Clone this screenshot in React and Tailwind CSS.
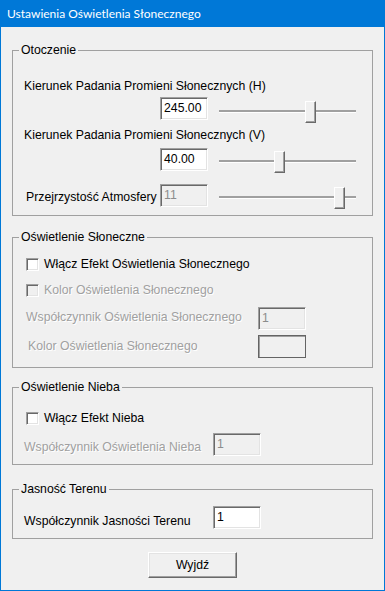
import React from 'react';

// classic sunken edit box
const TextBox = ({ value, disabled }) => (
  <div
    className={`w-[48px] h-[23px] shrink-0 flex items-center pl-[3px] border border-t-[#a0a0a0] border-l-[#a0a0a0] border-r-white border-b-white shadow-[inset_1px_1px_0_#696969,inset_-1px_-1px_0_#e3e3e3] ${
      disabled ? 'bg-[#f0f0f0] text-[#8c8c8c]' : 'bg-white text-black'
    }`}
  >
    {value}
  </div>
);

const CheckBox = ({ disabled }) => (
  <div
    className={`w-[13px] h-[13px] shrink-0 border border-t-[#a0a0a0] border-l-[#a0a0a0] border-r-white border-b-white shadow-[inset_1px_1px_0_#696969,inset_-1px_-1px_0_#e3e3e3] ${
      disabled ? 'bg-[#f0f0f0]' : 'bg-white'
    }`}
  />
);

const Slider = ({ thumb, top }) => (
  <div className={`relative w-[137px] h-[22px] ml-[11px] shrink-0 ${top}`}>
    <div className="mt-[9px] h-[3px] bg-[#a0a0a0] border-b border-white" />
    <div
      className={`absolute top-0 ${thumb} w-[11px] h-[22px] bg-[#f0f0f0] border border-t-white border-l-white border-r-[#696969] border-b-[#696969] shadow-[inset_-1px_-1px_0_#a0a0a0]`}
    />
  </div>
);

const Group = ({ title, className, children }) => (
  <fieldset
    className={`mx-[11px] px-[6px] border border-[#a0a0a0] ${className}`}
  >
    <legend className="px-[2px] leading-[15px] bg-[#f0f0f0]">{title}</legend>
    <div className="pl-[5px]">{children}</div>
  </fieldset>
);

const Disabled = ({ children, className = '' }) => (
  <div className={`text-[#a0a0a0] [text-shadow:1px_1px_0_#fff] leading-[15px] ${className}`}>
    {children}
  </div>
);

export default function App() {
  return (
    <div className="w-[385px] h-[591px] bg-[#0078d7] flex flex-col font-['Liberation_Sans',Arial,sans-serif] text-[12.25px] text-black select-none">
      {/* title bar */}
      <div className="h-[27px] flex items-center pl-[7px] text-white text-[12px] font-['Lato','Liberation_Sans',sans-serif] shrink-0">
        Ustawienia Oświetlenia Słonecznego
      </div>

      {/* client area */}
      <div className="flex-1 mx-px mb-px bg-[#f0f0f0] flex flex-col">
        <Group title="Otoczenie" className="mt-[16px] pb-[8px]">
          <div className="mt-[21px] leading-[15px]">Kierunek Padania Promieni Słonecznych (H)</div>
          <div className="mt-[3px] h-[23px] flex items-start">
            <div className="ml-[136px]">
              <TextBox value="245.00" />
            </div>
            <Slider thumb="left-[86px]" top="mt-[4px]" />
          </div>

          <div className="mt-[8px] leading-[15px]">Kierunek Padania Promieni Słonecznych (V)</div>
          <div className="mt-[5px] h-[23px] flex items-start">
            <div className="ml-[136px]">
              <TextBox value="40.00" />
            </div>
            <Slider thumb="left-[55px]" top="mt-[3px]" />
          </div>

          <div className="mt-[13px] h-[23px] flex items-start">
            <div className="w-[136px] pl-[2px] mt-[6px] leading-[15px]">Przejrzystość Atmosfery</div>
            <TextBox value="11" disabled />
            <Slider thumb="left-[115px]" top="mt-[3px]" />
          </div>
        </Group>

        <Group title="Oświetlenie Słoneczne" className="mt-[14px] pb-[9px]">
          <div className="mt-[12px] ml-[2px] flex items-center gap-[5px] leading-[15px]">
            <CheckBox />
            <span>Włącz Efekt Oświetlenia Słonecznego</span>
          </div>
          <div className="mt-[11px] ml-[2px] flex items-center gap-[5px]">
            <CheckBox disabled />
            <Disabled>Kolor Oświetlenia Słonecznego</Disabled>
          </div>
          <div className="mt-[9px] h-[23px] flex items-start">
            <Disabled className="w-[234px] pl-[2px] mt-[3px]">Współczynnik Oświetlenia Słonecznego</Disabled>
            <TextBox value="1" disabled />
          </div>
          <div className="mt-[5px] h-[23px] flex items-start">
            <Disabled className="w-[234px] pl-[4px] mt-[4px]">Kolor Oświetlenia Słonecznego</Disabled>
            <div className="w-[48px] h-[23px] border border-[#646464] shadow-[inset_1px_1px_0_#a0a0a0]" />
          </div>
        </Group>

        <Group title="Oświetlenie Nieba" className="mt-[12px] pb-[8px]">
          <div className="mt-[16px] ml-[2px] flex items-center gap-[5px] leading-[15px]">
            <CheckBox />
            <span>Włącz Efekt Nieba</span>
          </div>
          <div className="mt-[7px] h-[23px] flex items-start">
            <Disabled className="w-[189px] mt-[7px]">Współczynnik Oświetlenia Nieba</Disabled>
            <TextBox value="1" disabled />
          </div>
        </Group>

        <Group title="Jasność Terenu" className="mt-[17px] pb-[9px]">
          <div className="mt-[9px] h-[23px] flex items-start">
            <div className="w-[189px] mt-[8px] leading-[15px]">Współczynnik Jasności Terenu</div>
            <TextBox value="1" />
          </div>
        </Group>

        <button className="mt-[13px] mx-auto w-[89px] h-[26px] bg-[#f0f0f0] border border-t-white border-l-white border-r-[#696969] border-b-[#696969] shadow-[inset_-1px_-1px_0_#a0a0a0,inset_1px_1px_0_#e3e3e3] flex items-center justify-center">
          Wyjdź
        </button>
      </div>
    </div>
  );
}
